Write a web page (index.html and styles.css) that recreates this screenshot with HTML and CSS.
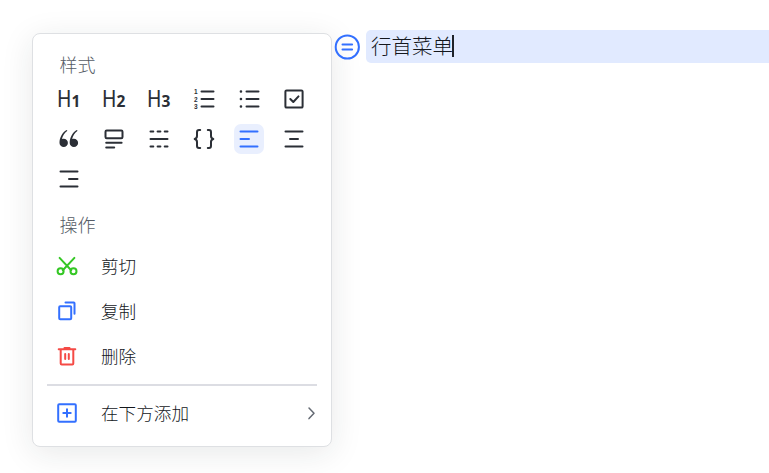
FILE: index.html
```html
<!DOCTYPE html>
<html lang="zh-CN">
<head>
<meta charset="utf-8">
<title>行首菜单</title>
<link rel="stylesheet" href="styles.css">
</head>
<body>
<main class="editor">
  <section class="menu">
    <h2 class="heading">样式</h2>
    <div class="tools">
      <button class="tool"><svg viewBox="0 0 30 30"><text class="h" transform="translate(3.200 23) scale(.85 1)">H</text><text class="n" x="17.500" y="23">1</text></svg></button>
      <button class="tool"><svg viewBox="0 0 30 30"><text class="h" transform="translate(3.200 23) scale(.85 1)">H</text><text class="n" x="17.500" y="23">2</text></svg></button>
      <button class="tool"><svg viewBox="0 0 30 30"><text class="h" transform="translate(3.200 23) scale(.85 1)">H</text><text class="n" x="17.500" y="23">3</text></svg></button>
      <button class="tool"><svg viewBox="0 0 30 30"><path d="M12.500 7.500h12M12.500 15h12M12.500 22.500h12"/><text class="s" x="5" y="10">1</text><text class="s" x="5" y="17.500">2</text><text class="s" x="5" y="25">3</text></svg></button>
      <button class="tool"><svg viewBox="0 0 30 30"><path d="M12.500 7.500h12M12.500 15h12M12.500 22.500h12"/><path class="dots" d="M6.900 7.500h.1M6.900 15h.1M6.900 22.500h.1"/></svg></button>
      <button class="tool"><svg viewBox="0 0 30 30"><rect x="6.400" y="6.400" width="17.200" height="17.200" rx="1.200"/><path d="M11.300 15l3 3 5.200-5.600"/></svg></button>
      <button class="tool"><svg viewBox="0 0 30 30"><path class="solid" d="M12.600 5.900C8.200 8.400 5.500 13.400 5.500 18.900a4.200 4.200 0 1 0 4.200-4.200c-.7 0-1.300.1-1.800.3.800-3.200 2.500-5.900 5.500-8.200zM22.800 5.900c-4.400 2.500-7.100 7.500-7.100 13a4.200 4.200 0 1 0 4.200-4.200c-.7 0-1.300.1-1.800.3.800-3.200 2.500-5.900 5.500-8.200z"/></svg></button>
      <button class="tool"><svg viewBox="0 0 30 30"><rect x="6.500" y="6.500" width="17" height="7.700" rx="1.200"/><path d="M7.200 18.700h15.400M7.200 23.400h8"/></svg></button>
      <button class="tool"><svg viewBox="0 0 30 30"><path d="M6.500 7.500h2.800M13.600 7.500h2.800M20.700 7.500h2.800M6.500 15h17M6.500 22.500h2.800M13.600 22.500h2.800M20.700 22.500h2.800"/></svg></button>
      <button class="tool"><svg viewBox="0 0 30 30"><path d="M11.200 6H10Q8 6 8 8.200V12q0 2.300-2.300 3Q8 15.700 8 18v3.800Q8 24 10 24h1.200M18.800 6H20q2 0 2 2.200V12q0 2.300 2.300 3Q22 15.700 22 18v3.800q0 2.200-2 2.200h-1.200"/></svg></button>
      <button class="tool active"><svg viewBox="0 0 30 30"><path d="M6.500 7.500h17M6.500 15h8.500M6.500 22.500h17"/></svg></button>
      <button class="tool"><svg viewBox="0 0 30 30"><path d="M6.500 7.500h17M11 15h8M6.500 22.500h17"/></svg></button>
      <button class="tool"><svg viewBox="0 0 30 30"><path d="M6.500 7.500h17M15 15h8.500M6.500 22.500h17"/></svg></button>
    </div>
    <h2 class="heading actions">操作</h2>
    <ul class="list">
      <li class="item"><svg class="icon green" viewBox="0 0 24 24"><path d="M4.600 3.900l11.600 12.300M19.400 3.900L7.800 16.200"/><circle cx="5.600" cy="17.200" r="3"/><circle cx="18.500" cy="17.200" r="3"/></svg><span>剪切</span></li>
      <li class="item"><svg class="icon blue" viewBox="0 0 24 24"><rect x="4.200" y="7.300" width="12" height="13" rx="1"/><path d="M10.500 3.500h8.300q.7 0 .7.700v10.500"/></svg><span>复制</span></li>
      <li class="item"><svg class="icon red" viewBox="0 0 24 24"><path d="M3.700 5.300h16.600M9.500 4.800V4h5v.8M5.700 5.300v14.200q0 1 1 1h10.600q1 0 1-1V5.300M10.200 10v5M13.800 10v5"/></svg><span>删除</span></li>
    </ul>
    <hr class="rule">
    <div class="item add"><svg class="icon blue" viewBox="0 0 24 24"><rect x="3.200" y="3.200" width="17.600" height="17.600" rx="1"/><path d="M12 8.300v7.400M8.300 12h7.400"/></svg><span>在下方添加</span><svg class="chevron" viewBox="0 0 12 16"><path d="M4 3l5 5.300-5 5.300"/></svg></div>
  </section>
  <svg class="handle" viewBox="0 0 26 26"><circle cx="13.300" cy="13" r="11.600"/><path d="M8.500 10.500h9.600M8.500 15.500h9.600"/></svg>
  <p class="line"><span>行首菜单</span><i class="caret"></i></p>
</main>
</body>
</html>
```
FILE: styles.css
```css
* { box-sizing: border-box; }
body {
  margin: 0;
  background: #fff;
  color: #14171c;
  font-family: "Noto Sans CJK SC", sans-serif;
  font-weight: 300;
  overflow: hidden;
}
.editor { display: flex; align-items: flex-start; height: 473px; padding: 30px 0 0 32px; }
.menu {
  flex: none;
  width: 300px;
  height: 414px;
  margin-top: 3px;
  padding: 16px 14px 0;
  border: 1px solid #dee0e3;
  border-radius: 8px;
  background: #fff;
  box-shadow: 0 6px 32px rgba(31, 35, 41, .1);
}
.heading { margin: 0 0 0 12.500px; font-size: 18px; line-height: 28px; font-weight: 300; color: #565c66; }
.tools { display: grid; grid-template-columns: repeat(6, 30px); gap: 10px 15px; margin: 6px 0 0 7px; }
.tool { width: 30px; height: 30px; padding: 0; border: 0; border-radius: 7px; background: none; color: #2b2f36; }
.tool.active { background: #e9effe; color: #3370ff; }
svg { display: block; fill: none; stroke: currentColor; stroke-width: 2; stroke-linecap: round; stroke-linejoin: round; }
.tool svg { width: 30px; height: 30px; }
.solid { fill: currentColor; stroke: none; }
.dots { stroke-width: 2.500; }
text { fill: currentColor; stroke: none; }
.h { font: 400 23px Roboto, sans-serif; }
.n { font: 700 15.500px "Open Sans", sans-serif; }
.s { font: 700 6.500px "Liberation Sans", sans-serif; }
.actions { margin-top: 16px; }
.list { margin: 5px 0 0; padding: 0; list-style: none; }
.item { display: flex; align-items: center; height: 45px; padding: 0 0 0 8px; font-size: 17.600px; line-height: 28px; }
.item span { margin: 0 0 0 22px; }
.add span { margin-top: -1px; }
.icon { width: 24px; height: 24px; }
.green { color: #34c724; }
.blue { color: #3370ff; }
.red { color: #f54a45; }
.rule { height: 2px; margin: 6px 0 0; border: 0; background: #dcdde3; }
.add { height: 54px; }
.chevron { width: 12px; height: 16px; margin-left: auto; color: #646a73; stroke-width: 1.500; }
.handle { flex: none; width: 26px; height: 26px; margin: 4px 6px 0 2px; color: #3370ff; }
.line {
  display: flex;
  align-items: center;
  flex: 1;
  height: 33px;
  margin: 0;
  padding-left: 5px;
  border-radius: 5px 0 0 5px;
  background: #e1eaff;
  font-size: 20.500px;
  line-height: 32px;
}
.line span { margin-top: -4px; }
.caret { width: 2px; height: 22px; margin: -2px 0 0 -1px; background: #1f2329; }
```
